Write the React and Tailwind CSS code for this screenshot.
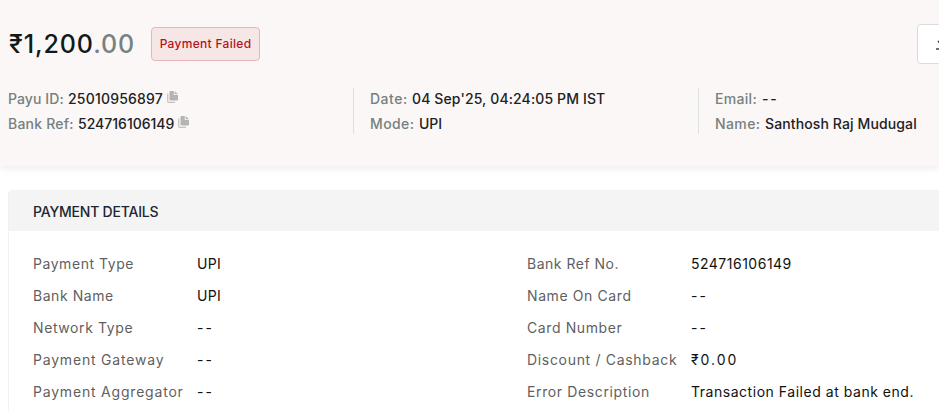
import React from 'react';

const summary = [
  [
    { label: 'Payu ID:', value: '25010956897', copy: true, labelStyle: 'w-[60px] tracking-[0.1px]', valueStyle: 'tracking-[0.2px]' },
    { label: 'Bank Ref:', value: '524716106149', copy: true, labelStyle: 'w-[70px] tracking-[0.2px]', valueStyle: 'tracking-normal' },
  ],
  [
    { label: 'Date:', value: "04 Sep'25, 04:24:05 PM IST", labelStyle: 'w-[42px] tracking-[0.5px]', valueStyle: 'tracking-[0.13px]' },
    { label: 'Mode:', value: 'UPI', labelStyle: 'w-[49px] tracking-[0.4px]', valueStyle: 'tracking-normal' },
  ],
  [
    { label: 'Email:', value: '--', labelStyle: 'w-[47px] tracking-[0.3px]', valueStyle: 'tracking-[1.7px]' },
    { label: 'Name:', value: 'Santhosh Raj Mudugal', labelStyle: 'w-[50px] tracking-[0.4px]', valueStyle: 'tracking-[0.12px]' },
  ],
];

const leftDetails = [
  { label: 'Payment Type', value: 'UPI', labelStyle: 'tracking-[0.55px]', valueStyle: 'tracking-[0.3px]' },
  { label: 'Bank Name', value: 'UPI', labelStyle: 'tracking-[0.55px]', valueStyle: 'tracking-[0.3px]' },
  { label: 'Network Type', value: '--', labelStyle: 'tracking-[0.6px]', valueStyle: 'tracking-[2px]' },
  { label: 'Payment Gateway', value: '--', labelStyle: 'tracking-[0.8px]', valueStyle: 'tracking-[2px]' },
  { label: 'Payment Aggregator', value: '--', labelStyle: 'tracking-[0.8px]', valueStyle: 'tracking-[2px]' },
];

const rightDetails = [
  { label: 'Bank Ref No.', value: '524716106149', labelStyle: 'tracking-[0.5px]', valueStyle: 'tracking-[0.5px]' },
  { label: 'Name On Card', value: '--', labelStyle: 'tracking-[0.6px]', valueStyle: 'tracking-[2px]' },
  { label: 'Card Number', value: '--', labelStyle: 'tracking-[0.6px]', valueStyle: 'tracking-[2px]' },
  { label: 'Discount / Cashback', value: '₹0.00', labelStyle: 'tracking-[0.68px]', valueStyle: 'tracking-[2px]' },
  { label: 'Error Description', value: 'Transaction Failed at bank end.', labelStyle: 'tracking-[0.62px]', valueStyle: 'tracking-[0.53px]' },
];

const CopyIcon = () => (
  <svg className="ml-1 h-3 w-[11px] shrink-0 -translate-y-0.5" viewBox="0 0 11 12" fill="none">
    <path d="M0.7 2.5V10.2Q0.7 11.4 1.9 11.4H8" stroke="#c2c0bf" strokeWidth="1.2" />
    <path d="M3.5 0H6.8V4H11V8.5Q11 9.5 10 9.5H3.5Q2.5 9.5 2.5 8.5V1Q2.5 0 3.5 0Z" fill="#b5b3b3" />
    <path d="M7.7 0L11 3.2H7.7Z" fill="#b5b3b3" />
  </svg>
);

const SummaryItem = ({ item }) => (
  <div className="flex h-[25px] items-center">
    <span className={`shrink-0 text-[#76807f] ${item.labelStyle}`}>{item.label}</span>
    <span className={`text-[#202124] ${item.valueStyle}`}>{item.value}</span>
    {item.copy && <CopyIcon />}
  </div>
);

const SummaryColumn = ({ items, className }) => (
  <div className={`flex flex-col ${className}`}>
    {items.map((item) => (
      <SummaryItem key={item.label} item={item} />
    ))}
  </div>
);

const DetailColumn = ({ items, className }) => (
  <dl className={className}>
    {items.map((item) => (
      <div key={item.label} className="flex h-8 items-center">
        <dt className={`w-[164px] shrink-0 text-[#5f5f5f] ${item.labelStyle}`}>{item.label}</dt>
        <dd className={`text-[#111111] ${item.valueStyle}`}>{item.value}</dd>
      </div>
    ))}
  </dl>
);

const App = () => {
  return (
    <div className="h-[411px] w-[939px] overflow-hidden bg-white font-['Inter',sans-serif] text-sm whitespace-nowrap">
      <header className="h-[166px] bg-[#fbf7f6] pt-6 shadow-[0_2px_8px_rgba(0,0,0,0.08)]">
        <div className="flex h-10 items-center">
          <h1 className="w-[151px] shrink-0 pl-[9px] text-[25px] leading-10 font-medium tracking-[0.9px] text-[#111a1a]">
            ₹1,200<span className="text-[#768281]">.00</span>
          </h1>
          <span className="flex h-[34px] w-[109px] shrink-0 items-center justify-center rounded border border-[#e7b5b5] bg-[#f6e7e6] text-xs font-medium tracking-[0.3px] text-[#b5121b]">
            Payment Failed
          </span>
          <button className="ml-[657px] h-10 w-[60px] shrink-0 rounded border border-[#dcdcdc] bg-white pl-[17px]">
            <svg className="h-4 w-4" viewBox="0 0 16 16" fill="none" stroke="#404040" strokeWidth="1.6">
              <path d="M8 1V9M3 5L8 10L13 5M1 13H15" />
            </svg>
          </button>
        </div>

        <div className="mt-[22px] flex font-medium">
          <SummaryColumn items={summary[0]} className="w-[353px] pl-2" />
          <div className="flex">
            <div className="mt-0.5 h-[46px] w-px bg-[#dce0df]" />
            <SummaryColumn items={summary[1]} className="w-[344px] pl-4" />
          </div>
          <div className="flex">
            <div className="mt-0.5 h-[46px] w-px bg-[#dce0df]" />
            <SummaryColumn items={summary[2]} className="pl-4" />
          </div>
        </div>
      </header>

      <section className="mt-6 ml-2 h-[240px] w-[940px] rounded-t border-l border-[#f0f0f0]">
        <h2 className="flex h-[41px] items-center rounded-tl bg-[#f4f4f4] pt-0.5 pl-6 font-medium tracking-[-0.2px] text-[#202733]">
          PAYMENT DETAILS
        </h2>
        <div className="flex pt-[17px] pl-6">
          <DetailColumn items={leftDetails} className="w-[494px]" />
          <DetailColumn items={rightDetails} className="" />
        </div>
      </section>
    </div>
  );
};

export default App;
